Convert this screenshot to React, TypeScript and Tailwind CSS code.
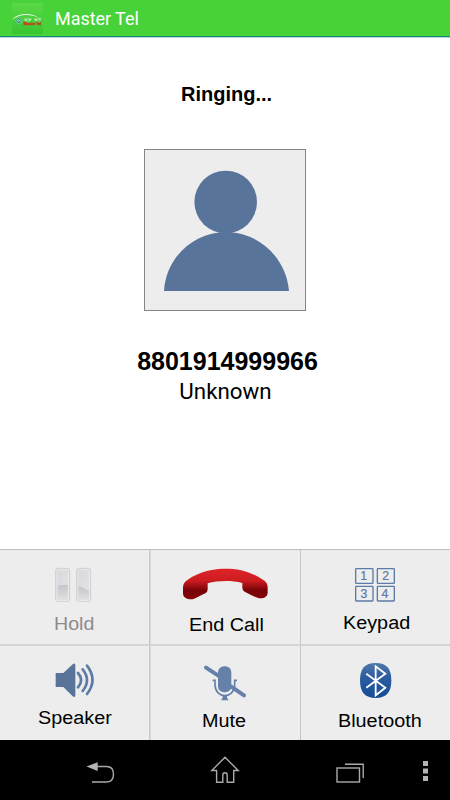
import type { ReactNode } from "react";

type CallButtonProps = {
  label: string;
  viewBox: string;
  iconClass: string;
  labelClass: string;
  className?: string;
  children: ReactNode;
};

function CallButton({ label, viewBox, iconClass, labelClass, className = "", children }: CallButtonProps) {
  return (
    <button type="button" className={`flex flex-col items-start bg-[#ededed] ${className}`}>
      <svg viewBox={viewBox} className={`block w-[149px] shrink-0 ${iconClass}`}>
        {children}
      </svg>
      <span className={`origin-left text-[18px] leading-5 whitespace-nowrap ${labelClass}`}>
        {label}
      </span>
    </button>
  );
}

function AppLogo() {
  return (
    <svg viewBox="0 0 93 93" className="ml-3 h-[31px] w-[31px]">
      <defs>
        <linearGradient id="logo" x1="0" y1="0" x2="0" y2="1">
          <stop offset="0" stopColor="#5bd846" />
          <stop offset="1" stopColor="#37c531" />
        </linearGradient>
      </defs>
      <rect width="93" height="93" rx="5" fill="url(#logo)" />
      <path d="M2 51C5 34 54 23 82 45C55 31 17 34 2 51Z" fill="#e9ffe4" />
      <circle cx="21" cy="53" r="9" fill="#2d9d6b" stroke="#8fe09a" strokeWidth="2" />
      <path d="M15 54l5-5 7 8M17 58l8-9" fill="none" stroke="#c5f0cb" strokeWidth="2" />
      <path d="M36 48h22M40 48v6l5-3v5M52 48v7M57 48l-4 7M66 48h20M70 48v7M76 48l-4 5 6 2M84 44v11" fill="none" stroke="#e2fbdd" strokeWidth="2" />
      <text x="35" y="66" textLength="53" lengthAdjust="spacingAndGlyphs" fontSize="10" fontWeight="700" fill="#c9401f" stroke="#c9401f" strokeWidth="1">
        Master Tel
      </text>
    </svg>
  );
}

function Avatar() {
  return (
    <div className="mt-[43px] h-[162px] w-[162px] border border-[#858585] bg-[#ededed]">
      <svg viewBox="0 0 160 160" className="block h-full w-full" fill="#59749a">
        <circle cx="80.7" cy="52" r="31.3" />
        <path d="M19 141C21 107 49 82 81 82S141 107 144 141Z" />
      </svg>
    </div>
  );
}

function NavBar() {
  return (
    <nav className="flex h-[60px] bg-black">
      <svg viewBox="0 0 450 60" className="block h-full w-full" fill="none" stroke="#aaaaaa" strokeWidth="1.4">
        <path d="M97 26.500h9.500Q113.500 26.500 113.500 34.200Q113.500 42 106 42H92" />
        <path d="M86.500 26.600L97.700 22.200V31Z" fill="#b4b4b4" stroke="none" />
        <path d="M225 17.200L238.200 30.500H233.700V42.300H227.200V35Q227.200 32.700 225 32.700Q222.800 32.700 222.800 35V42.300H216.600V30.500H211.800Z" />
        <rect x="337" y="28" width="22.500" height="14" />
        <path d="M345 24.200H363.200V38" />
        <path d="M423 21h5v5h-5zM423 28.500h5v5h-5zM423 36h5v5h-5z" fill="#b4b4b4" stroke="none" />
      </svg>
    </nav>
  );
}

export default function App() {
  return (
    <div className="flex h-[800px] w-[450px] flex-col overflow-hidden bg-white font-['Liberation_Sans',Arial,sans-serif] text-black">
      <header className="flex h-[38px] shrink-0 items-center border-b border-[#b5d5dc] bg-[#48d239]">
        <div className="flex h-[37px] w-full items-center border-b border-[#128d78]">
          <AppLogo />
          <h1 className="ml-3 pt-0.5 font-[Roboto,sans-serif] text-[18px] leading-6 tracking-[-0.05px] text-white">
            Master Tel
          </h1>
        </div>
      </header>

      <main className="flex flex-1 flex-col items-center">
        <p className="mt-[44px] pl-[3px] text-[20px] leading-6 font-bold">Ringing...</p>
        <Avatar />
        <p className="mt-[35px] pl-[5px] text-[25px] leading-[30px] font-bold">8801914999966</p>
        <p className="mt-px scale-x-[1.015] font-[Roboto,sans-serif] text-[22px] leading-[30px]">Unknown</p>
      </main>

      <section className="grid h-[191px] shrink-0 grid-cols-[150px_150px_150px] grid-rows-[96px_94px] border-t border-[#bdbdbd]">
        <CallButton
          label="Hold"
          viewBox="0 30 447 192"
          iconClass="h-[64px]"
          labelClass="ml-[53.500px] scale-x-[1.09] text-[#8b8b8b]"
          className="border-r border-b-2 border-r-[#c8c8c8] border-b-[#d5d5d5]"
        >
          <defs>
            <linearGradient id="bar" x1="0" y1="0" x2="1" y2="1">
              <stop offset="0" stopColor="#d5d7da" />
              <stop offset="1" stopColor="#e5e6e8" />
            </linearGradient>
            <linearGradient id="shade" x1="0" y1="0" x2="0" y2="1">
              <stop offset="0" stopColor="#c3c5c8" />
              <stop offset="1" stopColor="#dfe0e2" />
            </linearGradient>
          </defs>
          <rect x="167" y="85" width="42" height="99" rx="6" fill="url(#bar)" stroke="#d0d0d0" strokeWidth="3" />
          <rect x="230" y="85" width="42" height="99" rx="6" fill="url(#bar)" stroke="#d0d0d0" strokeWidth="3" />
          <path d="M171 138Q188 132 205 135V180H171Z" fill="url(#shade)" />
          <path d="M234 138Q253 142 268 153V180H234Z" fill="url(#shade)" />
          <path d="M171 181V89H205V181ZM234 181V89H268V181Z" fill="none" stroke="#eeeeee" strokeWidth="2" />
        </CallButton>

        <CallButton
          label="End Call"
          viewBox="3 30 447 195"
          iconClass="h-[65px]"
          labelClass="ml-[38px] scale-x-[1.1]"
          className="border-b-2 border-l border-b-[#d5d5d5] border-l-[#dadada]"
        >
          <defs>
            <linearGradient id="handset" x1="0" y1="0" x2="0" y2="1">
              <stop offset="0" stopColor="#dc2429" />
              <stop offset=".38" stopColor="#cf1c21" />
              <stop offset=".7" stopColor="#780307" />
              <stop offset="1" stopColor="#850408" />
            </linearGradient>
          </defs>
          <path
            d="M99 146C98 132 104 126 113 119C150 93 191 86 227 86C267 86 302 94 340 120C350 127 353 133 353 144V159C352 171 341 176 328 175C319 173 305 165 284 155Q277 151 277 143V129C247 121 204 121 173 130V148Q173 156 166 160C150 167 138 175 128 178C111 179 99 173 99 160Z"
            fill="url(#handset)"
          />
        </CallButton>

        <CallButton
          label="Keypad"
          viewBox="3 30 447 189"
          iconClass="h-[63px]"
          labelClass="ml-[42px] scale-x-[1.1]"
          className="border-b-2 border-l border-b-[#d5d5d5] border-l-[#c5c5c5]"
        >
          <g fill="none" stroke="#5c7ba6" strokeWidth="4">
            <rect x="167" y="86" width="52" height="44" rx="2" />
            <rect x="232" y="86" width="51" height="44" rx="2" />
            <rect x="167" y="139" width="52" height="44" rx="2" />
            <rect x="232" y="139" width="51" height="44" rx="2" />
          </g>
          <g fill="#5c7ba6" stroke="#5c7ba6" strokeWidth=".7" fontSize="37" textAnchor="middle">
            <text x="191" y="121">1</text>
            <text x="257" y="121">2</text>
            <text x="192" y="174">3</text>
            <text x="255" y="174">4</text>
          </g>
        </CallButton>

        <CallButton
          label="Speaker"
          viewBox="0 18 447 186"
          iconClass="h-[62px]"
          labelClass="ml-[37.500px] scale-x-[1.1]"
          className="border-r border-r-[#c8c8c8]"
        >
          <path d="M167 99H190L219 72Q226 68 226 76V166Q226 174 218 169L190 141H167Z" fill="#59749a" />
          <g fill="none" stroke="#5c7ba6" strokeWidth="8" strokeLinecap="round">
            <path d="M234 99Q253 120 234 142" />
            <path d="M248 88Q274 120 248 153" />
            <path d="M261 77Q294 120 261 162" />
          </g>
        </CallButton>

        <CallButton
          label="Mute"
          viewBox="3 18 447 195"
          iconClass="h-[65px]"
          labelClass="ml-[50.500px] scale-x-[1.1]"
          className="border-l border-l-[#dadada]"
        >
          <rect x="204" y="79" width="40" height="78" rx="18" fill="#6581aa" />
          <path d="M188 121H195V136C198 177 251 177 254 136V121H261" fill="none" stroke="#6581aa" strokeWidth="5" />
          <path d="M218 165H231V174Q235 176 235 181H214Q214 176 218 174Z" fill="#6581aa" />
          <path d="M168 83L205 107M244 140L282 166" stroke="#6581aa" strokeWidth="12" strokeLinecap="round" />
        </CallButton>

        <CallButton
          label="Bluetooth"
          viewBox="3 18 447 195"
          iconClass="h-[65px]"
          labelClass="ml-[37px] scale-x-[1.1]"
          className="border-l border-l-[#c5c5c5]"
        >
          <defs>
            <linearGradient id="bluetooth" x1="0" y1="0" x2="0" y2="1">
              <stop offset="0" stopColor="#5078aa" />
              <stop offset=".4" stopColor="#2d5d9e" />
              <stop offset="1" stopColor="#154c98" />
            </linearGradient>
          </defs>
          <path
            d="M227 69C260 69 274 86 274 121S260 174 227 174S180 156 180 121S194 69 227 69Z"
            fill="url(#bluetooth)"
          />
          <path d="M199 101L256 143L227 166V79L256 101L199 143" fill="none" stroke="white" strokeWidth="5.500" />
        </CallButton>
      </section>

      <NavBar />
    </div>
  );
}
